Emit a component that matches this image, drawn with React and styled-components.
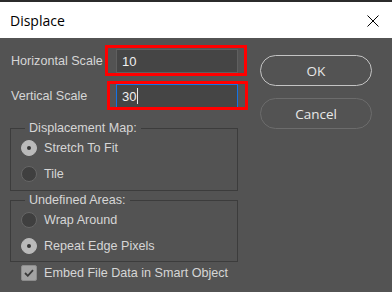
import React from "react";
import styled, { createGlobalStyle } from "styled-components";

const Global = createGlobalStyle`
  html, body { margin: 0; padding: 0; background: #535353; }
  body { width: 392px; height: 292px; overflow: hidden; }
  * { box-sizing: border-box; }
`;

const Dialog = styled.div`
  width: 392px;
  height: 292px;
  display: flex;
  flex-direction: column;
  background: #535353;
  border-top: 2px solid #2b2b2b;
  font-family: "Liberation Sans", Arial, sans-serif;
  font-size: 12.6px;
  color: #d6d6d6;
`;

const TitleBar = styled.div`
  height: 36px;
  flex: none;
  background: #ffffff;
  display: flex;
  align-items: center;
  justify-content: space-between;
  padding: 0 13px 0 10px;
`;

const Title = styled.span`
  font-family: "Open Sans", "Noto Sans", sans-serif;
  font-size: 14px;
  color: #000;
  line-height: 1;
  margin-top: 1px;
`;

const Close = styled.svg`
  width: 12px;
  height: 12px;
  margin-top: 2px;
`;

const Body = styled.div`
  flex: 1;
  display: grid;
  grid-template-columns: 228px 112px;
  column-gap: 22px;
  padding: 11px 0 0 10px;
`;

const LeftCol = styled.div`
  display: flex;
  flex-direction: column;
`;

const FieldRow = styled.div`
  height: 24px;
  display: flex;
  align-items: center;
  justify-content: space-between;
  padding-left: 1px;
  margin-bottom: ${(p) => p.$mb || 0}px;
`;

const Label = styled.span`
  color: #d6d6d6;
`;

const InputWrap = styled.div`
  position: relative;
  width: 122px;
  height: 24px;
`;

const Input = styled.div`
  width: 100%;
  height: 100%;
  background: #454545;
  border: 1px solid ${(p) => (p.$focused ? "#1473e6" : "#5f5f5f")};
  display: flex;
  align-items: center;
  padding-left: 5px;
  color: #f0f0f0;
  font-size: 13px;
`;

const Caret = styled.span`
  display: inline-block;
  width: 1px;
  height: 16px;
  background: #e8e8e8;
  margin-left: 1px;
`;

const Highlight = styled.div`
  position: absolute;
  top: ${(p) => p.$t}px;
  right: ${(p) => p.$r}px;
  bottom: ${(p) => p.$b}px;
  left: ${(p) => p.$l}px;
  border: 3px solid #ff0000;
  pointer-events: none;
`;

const Group = styled.fieldset`
  margin: ${(p) => p.$mt || 0}px 0 0 0;
  padding: 0 0 ${(p) => p.$pb}px 10px;
  border: 1px solid #3c3c3c;
  display: flex;
  flex-direction: column;
`;

const Legend = styled.legend`
  margin-left: 4px;
  padding: 0 4px;
  line-height: 14px;
  color: #d6d6d6;
`;

const OptionRow = styled.div`
  height: 26px;
  display: flex;
  align-items: center;
  gap: 7px;
`;

const Radio = styled.span`
  width: 16px;
  height: 16px;
  border-radius: 50%;
  flex: none;
  display: flex;
  align-items: center;
  justify-content: center;
  background: ${(p) => (p.$checked ? "#bababa" : "#3f3f3f")};
  border: 1px solid ${(p) => (p.$checked ? "#bababa" : "#666666")};
  &::after {
    content: "";
    width: 4px;
    height: 4px;
    border-radius: 50%;
    background: #353535;
    display: ${(p) => (p.$checked ? "block" : "none")};
  }
`;

const CheckRow = styled.div`
  height: 16px;
  margin-top: 3px;
  padding-left: 11px;
  display: flex;
  align-items: center;
  gap: 7px;
`;

const Checkbox = styled.span`
  width: 16px;
  height: 16px;
  flex: none;
  border-radius: 2px;
  background: #a3a3a3;
  border: 1px solid #8c8c8c;
  display: flex;
  align-items: center;
  justify-content: center;
`;

const RightCol = styled.div`
  display: flex;
  flex-direction: column;
  gap: 12px;
  padding-top: 6px;
`;

const Button = styled.div`
  height: 31px;
  border-radius: 16px;
  border: 1.5px solid ${(p) => (p.$primary ? "#c4c4c4" : "#6c6c6c")};
  display: flex;
  align-items: center;
  justify-content: center;
  font-family: "Open Sans", "Noto Sans", sans-serif;
  font-size: 13.5px;
  color: #e8e8e8;
`;

export default function App() {
  return (
    <>
      <Global />
      <Dialog>
        <TitleBar>
          <Title>Displace</Title>
          <Close viewBox="0 0 12 12">
            <path d="M0.5 0.5 L11.5 11.5 M11.5 0.5 L0.5 11.5" stroke="#000" strokeWidth="1" fill="none" />
          </Close>
        </TitleBar>
        <Body>
          <LeftCol>
            <FieldRow $mb={11}>
              <Label>Horizontal Scale</Label>
              <InputWrap>
                <Input>10</Input>
                <Highlight $t={-4} $r={-9} $b={-3} $l={-11} />
              </InputWrap>
            </FieldRow>
            <FieldRow>
              <Label>Vertical Scale</Label>
              <InputWrap>
                <Input $focused>
                  30<Caret />
                </Input>
                <Highlight $t={-3} $r={-10} $b={-2} $l={-9} />
              </InputWrap>
            </FieldRow>
            <Group $mt={13} $pb={3}>
              <Legend>Displacement Map:</Legend>
              <OptionRow>
                <Radio $checked />
                <Label>Stretch To Fit</Label>
              </OptionRow>
              <OptionRow>
                <Radio />
                <Label>Tile</Label>
              </OptionRow>
            </Group>
            <Group $mt={2} $pb={2}>
              <Legend>Undefined Areas:</Legend>
              <OptionRow>
                <Radio />
                <Label>Wrap Around</Label>
              </OptionRow>
              <OptionRow>
                <Radio $checked />
                <Label>Repeat Edge Pixels</Label>
              </OptionRow>
            </Group>
            <CheckRow>
              <Checkbox>
                <svg width="10" height="8" viewBox="0 0 10 8">
                  <path d="M1 4 L3.8 6.8 L9 1.2" stroke="#3a3a3a" strokeWidth="1.8" fill="none" />
                </svg>
              </Checkbox>
              <Label>Embed File Data in Smart Object</Label>
            </CheckRow>
          </LeftCol>
          <RightCol>
            <Button $primary>OK</Button>
            <Button>Cancel</Button>
          </RightCol>
        </Body>
      </Dialog>
    </>
  );
}
